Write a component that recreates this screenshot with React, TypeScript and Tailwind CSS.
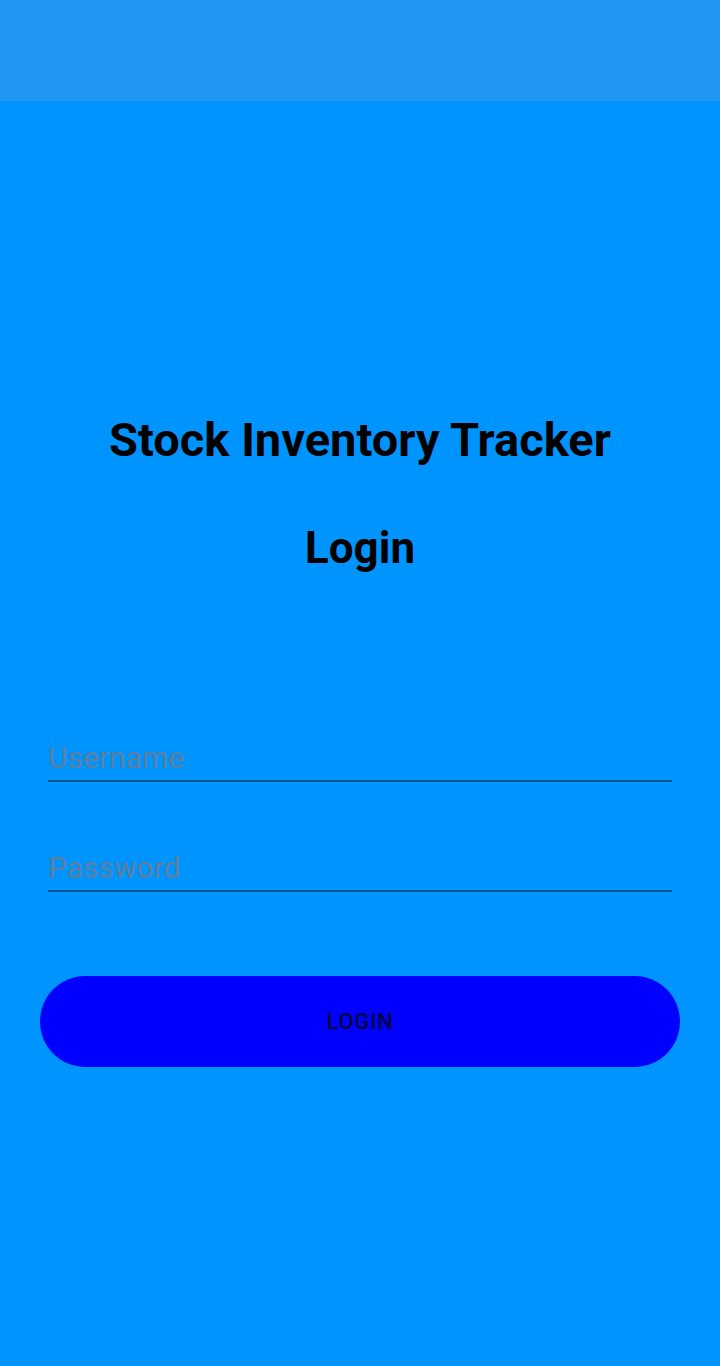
export default function App() {
  return (
    <div className="min-h-[1366px] w-[720px] bg-[#0094ff] flex flex-col" style={{ fontFamily: "Roboto, 'Noto Sans', sans-serif" }}>
      <div className="h-[101px] bg-[#2196f3] shrink-0" />
      <div className="flex flex-col items-center pt-[312px]">
        <h1 className="text-[47px] leading-[54px] font-bold text-black">Stock Inventory Tracker</h1>
        <h2 className="mt-[54px] text-[44px] leading-[54px] font-bold text-black">Login</h2>
      </div>
      <div className="flex flex-col px-[48px] mt-[155px]">
        <div className="border-b-2 border-[#17568f] h-[52px] flex items-end pb-[5px]">
          <span className="text-[30px] leading-[34px] text-[#5e7f9c]">Username</span>
        </div>
        <div className="mt-[58px] border-b-2 border-[#17568f] h-[52px] flex items-end pb-[5px]">
          <span className="text-[30px] leading-[34px] text-[#5e7f9c]">Password</span>
        </div>
      </div>
      <div className="px-[40px] mt-[84px]">
        <button className="w-full h-[91px] rounded-full bg-[#0000ff] flex items-center justify-center text-[22px] font-medium text-[#06063a] tracking-[0.8px]">
          LOGIN
        </button>
      </div>
    </div>
  );
}
